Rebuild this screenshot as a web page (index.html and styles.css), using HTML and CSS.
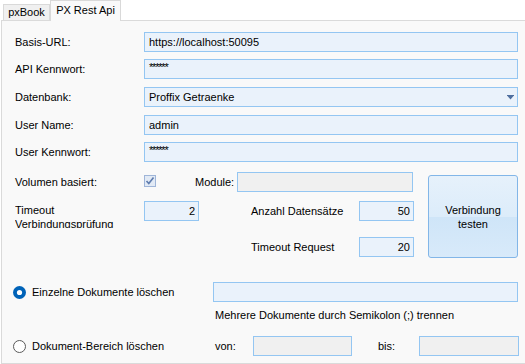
FILE: index.html
```html
<!DOCTYPE html>
<html>
<head>
<title>PX Rest Api</title>
<link rel="stylesheet" href="styles.css">
</head>
<body>
<div class="tabs">
  <div class="tab">pxBook</div>
  <div class="tab active">PX Rest Api</div>
</div>

<div class="panel">
  <div class="top-rows">
    <div class="row">
      <label class="lbl">Basis-URL:</label>
      <input class="field wide" type="text" value="https://localhost:50095">
    </div>
    <div class="row">
      <label class="lbl">API Kennwort:</label>
      <div class="field wide pw">******</div>
    </div>
    <div class="row gap8">
      <label class="lbl">Datenbank:</label>
      <div class="field wide select">
        <span>Proffix Getraenke</span>
        <svg width="7" height="5" viewBox="0 0 7 5"><path d="M0 0h7v1H0z M0.5 1h6L3.5 4.5z" fill="#4f6f9f"/></svg>
      </div>
    </div>
    <div class="row gap8">
      <label class="lbl">User Name:</label>
      <input class="field wide" type="text" value="admin">
    </div>
    <div class="row">
      <label class="lbl">User Kennwort:</label>
      <div class="field wide pw">******</div>
    </div>
  </div>

  <div class="mid">
    <div class="mid-left">
      <div class="row">
        <label class="lbl">Volumen basiert:</label>
        <div class="check-cell">
          <span class="check">
            <svg width="10" height="10" viewBox="0 0 10 10"><path d="M1.5 5l2.3 2.6L8.5 1.5" fill="none" stroke="#5f7cae" stroke-width="1.6"/></svg>
          </span>
        </div>
        <label class="lbl-module">Module:</label>
        <input class="field disabled module" type="text" value="">
      </div>
      <div class="row row-b">
        <label class="lbl lbl-two">Timeout Verbindungsprüfung</label>
        <input class="field num small" type="text" value="2">
        <label class="lbl-mid">Anzahl Datensätze</label>
        <input class="field num small" type="text" value="50">
      </div>
      <div class="row row-c">
        <label class="lbl-mid indent">Timeout Request</label>
        <input class="field num small" type="text" value="20">
      </div>
    </div>
    <button class="btn">Verbindung<br>testen</button>
  </div>

  <div class="bottom">
    <div class="row">
      <label class="radio-lbl">
        <svg class="radio" width="13" height="13" viewBox="0 0 13 13"><circle cx="6.5" cy="6.5" r="6.5" fill="#0063b8"/><circle cx="6.5" cy="6.5" r="2.6" fill="#fff"/></svg>
        Einzelne Dokumente löschen
      </label>
      <input class="field docs" type="text" value="">
    </div>
    <div class="hint">Mehrere Dokumente durch Semikolon (;) trennen</div>
    <div class="row row-range">
      <label class="radio-lbl">
        <svg class="radio" width="13" height="13" viewBox="0 0 13 13"><circle cx="6.5" cy="6.5" r="6" fill="#fff" stroke="#5a5a5a" stroke-width="1"/></svg>
        Dokument-Bereich löschen
      </label>
      <label class="lbl-von">von:</label>
      <input class="field disabled range" type="text" value="">
      <label class="lbl-bis">bis:</label>
      <input class="field disabled range" type="text" value="">
    </div>
  </div>
</div>
</body>
</html>
```

FILE: styles.css
```css
html, body {
  margin: 0;
  height: 100%;
}
body {
  font-family: "Liberation Sans", Arial, sans-serif;
  font-size: 11px;
  color: #000;
  background: #fff;
  display: flex;
  flex-direction: column;
  overflow: hidden;
}

/* tab strip */
.tabs {
  display: flex;
  align-items: flex-end;
  height: 20px;
  padding-left: 3px;
}
.tab {
  box-sizing: border-box;
  width: 47px;
  height: 16px;
  line-height: 15px;
  text-align: center;
  background: #f0f0f0;
  border: 1px solid #d9d9d9;
  border-bottom: none;
}
.tab.active {
  width: 71px;
  height: 21px;
  line-height: 19px;
  margin-bottom: -1px;
  background: #f9f9f9;
  position: relative;
  z-index: 1;
}

/* main panel */
.panel {
  flex: 1;
  margin-left: 1px;
  margin-right: -2px;
  border: 1px solid #dadada;
  background: #f9f9f9;
  padding: 11px 0 0 13px;
}

.row {
  display: flex;
  align-items: center;
  height: 20px;
}
.top-rows .row + .row {
  margin-top: 7px;
}
.top-rows .row.gap8 {
  margin-top: 8px;
}
.lbl {
  width: 129px;
  flex: none;
}

.field {
  box-sizing: border-box;
  height: 20px;
  border: 1px solid #94c6f2;
  background: #eaf2fb;
  font: inherit;
  color: #000;
  padding: 0 4px;
  margin: 0;
  outline: none;
  flex: none;
}
div.field {
  line-height: 18px;
}
.wide {
  width: 374px;
}
.field.pw {
  letter-spacing: -1.2px;
  line-height: 15px;
}
.select {
  display: flex;
  justify-content: space-between;
  align-items: center;
  padding-right: 3px;
}
.disabled {
  background: #f0f0f0;
}

/* middle block */
.mid {
  display: flex;
  align-items: flex-start;
  margin-top: 10px;
}
.mid-left {
  width: 398px;
}
.check-cell {
  width: 51px;
  flex: none;
  display: flex;
  align-items: center;
  height: 20px;
}
.check {
  box-sizing: border-box;
  width: 12px;
  height: 12px;
  border: 1px solid #9fb5d8;
  background: #e2eaf5;
  display: flex;
  align-items: center;
  justify-content: center;
  margin-top: -3px;
}
.lbl-module {
  width: 42px;
  flex: none;
}
.module {
  width: 176px;
}
.row-b {
  margin-top: 9px;
  align-items: flex-start;
}
.lbl-two {
  box-sizing: border-box;
  height: 27px;
  padding-top: 2px;
  line-height: 14px;
  overflow: hidden;
  width: 129px;
}
.num {
  text-align: right;
  padding-right: 3px;
}
.small {
  width: 55px;
}
.lbl-mid {
  width: 108px;
  margin-left: 52px;
  flex: none;
  line-height: 20px;
}
.lbl-mid.indent {
  margin-left: 236px;
}
.row-c {
  margin-top: 16px;
}

.btn {
  box-sizing: border-box;
  width: 90px;
  height: 83px;
  margin: 3px 0 0 15px;
  border: 1px solid #82b6e8;
  border-radius: 3px;
  background: linear-gradient(#e6f1fb 0%, #dcecfa 50%, #cfe5f8 51%, #d8eafa 100%);
  font: inherit;
  line-height: 14px;
  color: #000;
  padding: 0;
}

/* bottom block */
.bottom {
  margin-top: 24px;
}
.radio-lbl {
  width: 200px;
  flex: none;
  display: flex;
  align-items: center;
  margin-left: -2px;
}
.radio {
  margin-right: 6px;
  flex: none;
}
.docs {
  width: 305px;
}
.hint {
  margin: 6px 0 0 200px;
  line-height: 14px;
}
.row-range {
  margin-top: 14px;
}
.row-range .radio-lbl {
  width: 202px;
}
.lbl-von {
  width: 38px;
  flex: none;
}
.range {
  width: 99px;
}
.lbl-bis {
  width: 41px;
  margin-left: 26px;
  flex: none;
}
.row-range .range:last-child {
  width: 100px;
}
```
